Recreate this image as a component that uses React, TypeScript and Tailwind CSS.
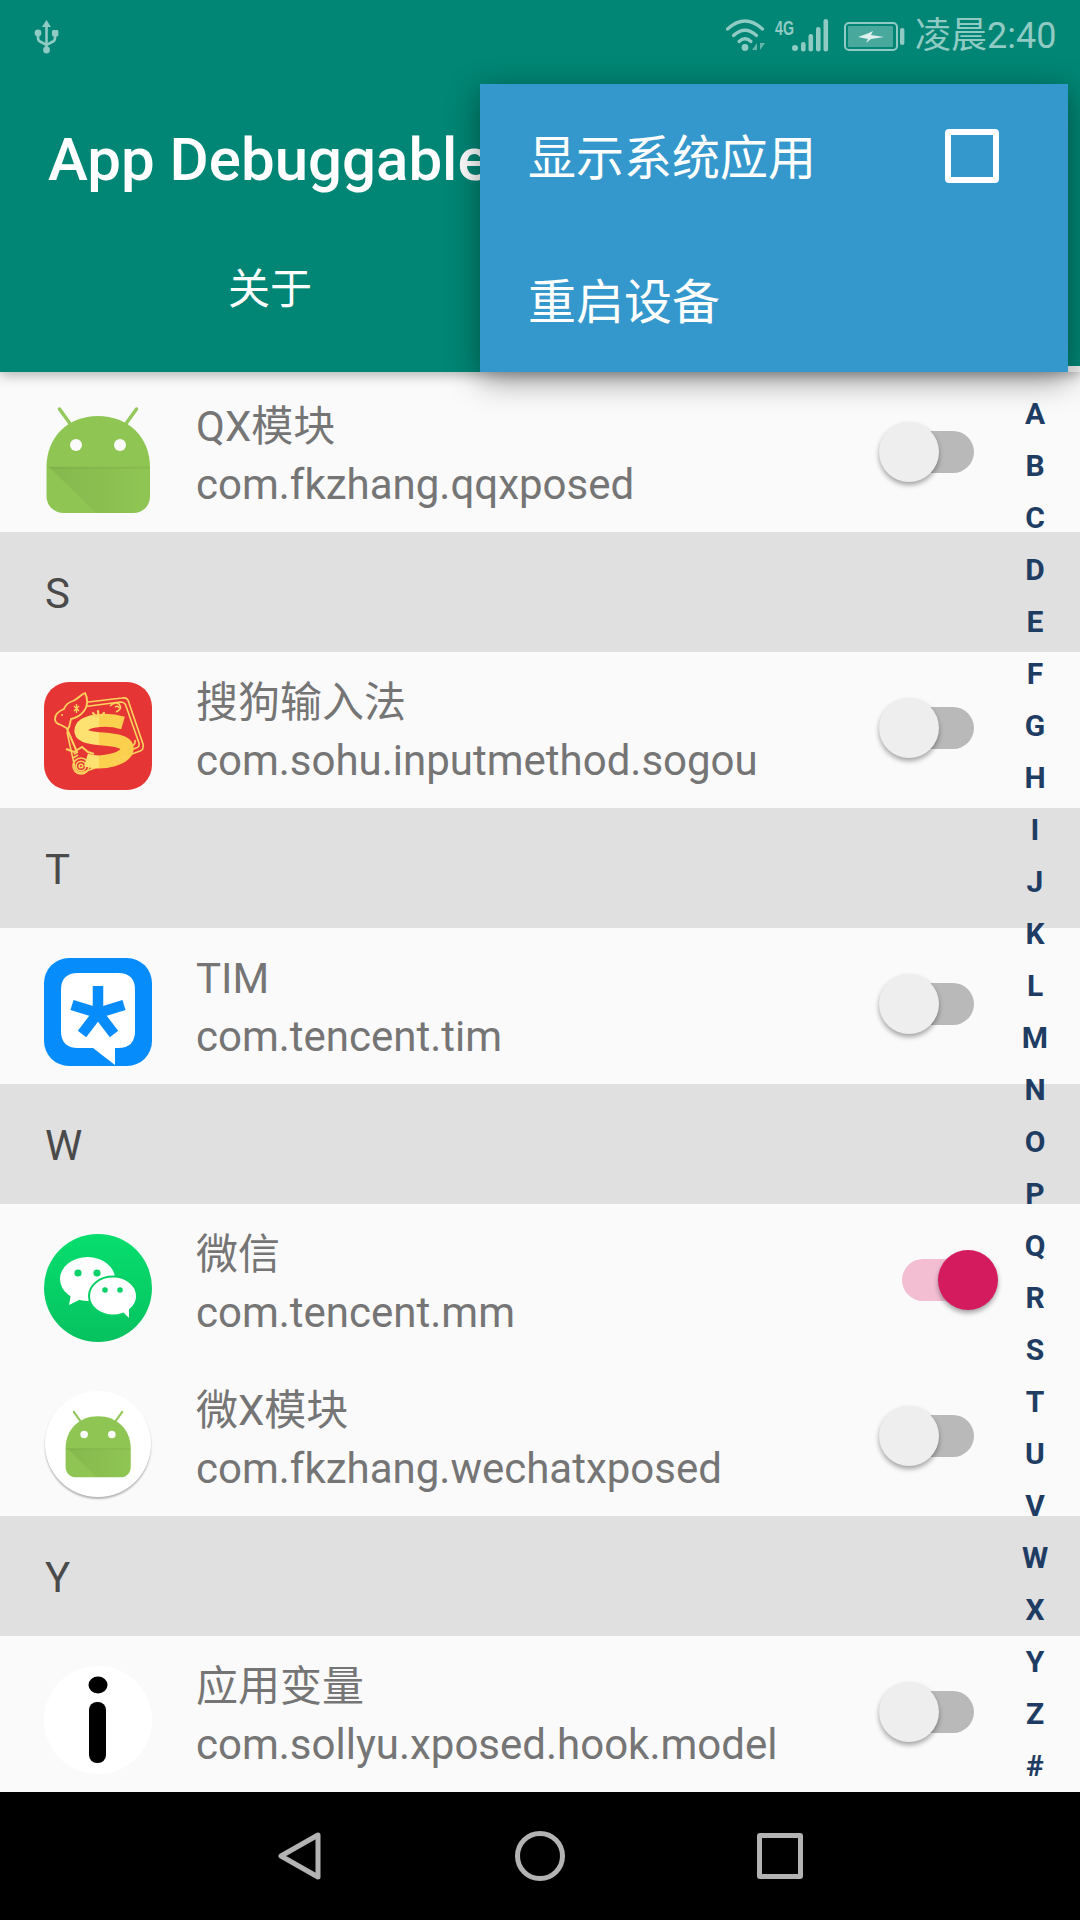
import React from "react";

const FONT = "font-['Roboto','Noto_Sans_CJK_SC',sans-serif]";

function AndroidIcon({ size = 108, id }: { size?: number; id: string }) {
  return (
    <svg width={size} height={size} viewBox="0 0 108 108">
      <defs>
        <linearGradient id={id} x1="0" y1="0" x2="1" y2="0">
          <stop offset="0" stopColor="#000" stopOpacity="0.07" />
          <stop offset="1" stopColor="#000" stopOpacity="0" />
        </linearGradient>
      </defs>
      <path d="M15.5 3 L27 19 M92.5 3 L81 19" stroke="#93c85a" strokeWidth="3.4" strokeLinecap="round" />
      <path
        d="M2.5 61 C2.5 31 24 10 54 10 C84 10 106 31 106 61 L106 90 C106 100 99 107 89 107 L20 107 C10 107 2.5 100 2.5 90 Z"
        fill="#8fc653"
      />
      <path d="M2.5 60.5 L106 60.5 L106 63 L6 63 Z" fill="#000" opacity="0.04" />
      <path d="M5 61 L52 107 L106 107 L106 61 Z" fill={`url(#${id})`} />
      <circle cx="32" cy="39" r="6" fill="#fafafa" />
      <circle cx="76" cy="39" r="6" fill="#fafafa" />
    </svg>
  );
}

function SogouIcon() {
  return (
    <svg width="108" height="108" viewBox="0 0 108 108">
      <defs>
        <linearGradient id="sg" gradientUnits="userSpaceOnUse" x1="30" y1="0" x2="84" y2="0">
          <stop offset="0.46" stopColor="#fde272" />
          <stop offset="0.46" stopColor="#fbd04f" />
        </linearGradient>
      </defs>
      <rect width="108" height="108" rx="25" fill="#e53635" />
      <g fill="none" stroke="#fbd35e" strokeWidth="1.6">
        <path d="M36 21 L78 16 Q84 15 85 21 L99 62 Q100 68 96 69 L40 90 Q33 92 31 86 L23 50" />
        <path d="M38 25 L76 20 Q81 20 82 24 L95 61 Q96 65 92 66 L60 78" />
        <path d="M66 24 q5 -5 9 -2 q4 5 -3 8 M71 25 q3 -2 4 1 M86 65 q6 -2 5 -7 M78 74 q6 -1 9 -6 M60 84 l4 -5 l6 2" />
        <circle cx="37" cy="84" r="8" />
        <circle cx="37" cy="84" r="4.8" />
        <circle cx="37" cy="84" r="1.8" />
        <path d="M47 88 l3 -7 l4 5 M29 76 l5 -3 M30 72 l4 -2" />
      </g>
      <path
        d="M11 37 C11 32 15 29 20 27 C22 22 25 20 29 19 C34 17 36 13 41 11 C44 16 44 24 40 29 C37 33 32 36 27 37 C26 41 26 44 24 47 C21 45 19 44 17 43 C13 42 11 40 11 37 Z"
        fill="#e53635"
        stroke="#fbd35e"
        strokeWidth="1.8"
      />
      <path d="M30 24 l5 5 M35 24 l-5 5 M32.5 22 l0 9" stroke="#fbd35e" strokeWidth="1.3" />
      <circle cx="18" cy="33" r="1" fill="#fbd35e" />
      <path d="M23 47 L33 70 M22 67 L30 70 L38 65 L44 70 L50 72" stroke="#fbd35e" strokeWidth="2" fill="none" />
      <path
        d="M79 41 C62 36 35 38 37 50 C39 60 81 54 83 65 C85 77 58 83 42 78"
        fill="none"
        stroke="url(#sg)"
        strokeWidth="13"
      />
      <path d="M54 29 l0.5 5 M49 31 l3 3.5 M60 31 l-3 3.5" stroke="#fbd35e" strokeWidth="2.2" strokeLinecap="round" />
      <circle cx="75" cy="78" r="1.7" fill="#fbd35e" />
      <circle cx="70" cy="80" r="1.7" fill="#fbd35e" />
      <circle cx="80" cy="75" r="1.7" fill="#fbd35e" />
    </svg>
  );
}

function TimIcon() {
  return (
    <svg width="108" height="108" viewBox="0 0 108 108">
      <rect width="108" height="108" rx="25" fill="#078cfc" />
      <path
        d="M34 15 L74 15 Q91 15 91 32 L91 73 Q91 90 74 90 L71 90 L71 107 L49 90 L34 90 Q17 90 17 73 L17 32 Q17 15 34 15 Z"
        fill="#fff"
      />
      <path d="M54 55 L54 28 M54 55 L28 47 M54 55 L80 47 M54 55 L38 76 M54 55 L70 76" stroke="#078cfc" strokeWidth="10.5" />
    </svg>
  );
}

function WechatIcon() {
  return (
    <svg width="108" height="108" viewBox="0 0 108 108">
      <defs>
        <linearGradient id="wx" x1="0" y1="0" x2="0" y2="1">
          <stop offset="0" stopColor="#07de6e" />
          <stop offset="1" stopColor="#06c25f" />
        </linearGradient>
      </defs>
      <circle cx="54" cy="54" r="54" fill="url(#wx)" />
      <ellipse cx="43.5" cy="45" rx="27.5" ry="22" fill="#fff" />
      <path d="M27 60 L25 71 L37 65 Z" fill="#fff" />
      <ellipse cx="69" cy="62" rx="24" ry="19.5" fill="#fff" stroke="#07cf66" strokeWidth="2" />
      <path d="M78 77 L85 84 L85 73 Z" fill="#fff" />
      <circle cx="34" cy="39" r="3.6" fill="#07d269" />
      <circle cx="53" cy="39" r="3.6" fill="#07d269" />
      <circle cx="61" cy="56" r="2.8" fill="#07d269" />
      <circle cx="76" cy="56" r="2.8" fill="#07d269" />
    </svg>
  );
}

function InfoIcon() {
  return (
    <svg width="108" height="108" viewBox="0 0 108 108">
      <circle cx="54" cy="54" r="54" fill="#fff" />
      <ellipse cx="54" cy="19" rx="9.5" ry="8.5" fill="#000" />
      <rect x="45" y="36" width="17" height="61" rx="8" fill="#000" />
    </svg>
  );
}

function WxModuleIcon() {
  return (
    <div className="w-[106px] h-[106px] rounded-full bg-white flex items-center justify-center shadow-[0_2px_2px_rgba(0,0,0,0.28)]">
      <AndroidIcon size={68} id="and2" />
    </div>
  );
}

function Switch({ on }: { on?: boolean }) {
  return (
    <div className="relative w-[120px] h-[60px] mt-[46px] ml-auto mr-[82px] shrink-0">
      <div
        className={
          on
            ? "absolute left-[24px] top-[9px] w-[72px] h-[42px] rounded-full bg-[#f3bed2]"
            : "absolute left-[24px] top-[9px] w-[72px] h-[42px] rounded-full bg-[#b9b9b9]"
        }
      />
      <div
        className={
          on
            ? "absolute left-[60px] top-0 w-[60px] h-[60px] rounded-full bg-[#d31b5e] shadow-[0_3px_5px_rgba(0,0,0,0.35)]"
            : "absolute left-[1px] top-0 w-[60px] h-[60px] rounded-full bg-[#eeeeee] shadow-[0_3px_5px_rgba(0,0,0,0.35)]"
        }
      />
    </div>
  );
}

function Row({
  icon,
  title,
  pkg,
  on,
  extraTop,
}: {
  icon: React.ReactNode;
  title: string;
  pkg: string;
  on?: boolean;
  extraTop?: boolean;
}) {
  return (
    <div className={extraTop ? "flex h-[160px] pt-[4px] bg-[#fafafa]" : "flex h-[156px] bg-[#fafafa]"}>
      <div className="w-[108px] h-[108px] ml-[44px] mt-[30px] shrink-0 flex items-center justify-center">{icon}</div>
      <div className="ml-[44px] pt-[21px] text-[#757575] text-[42px]">
        <div className="leading-[60px] whitespace-nowrap">{title}</div>
        <div className="leading-[60px] -mt-[2px] whitespace-nowrap">{pkg}</div>
      </div>
      <Switch on={on} />
    </div>
  );
}

function Section({ letter }: { letter: string }) {
  return (
    <div className="h-[120px] bg-[#e0e0e0] flex items-center pl-[45px] pt-[2px] text-[42px] text-[#4a4a4a]">{letter}</div>
  );
}

const LETTERS = "ABCDEFGHIJKLMNOPQRSTUVWXYZ#".split("");

export default function App() {
  return (
    <div className={`relative w-[1080px] h-[1920px] overflow-hidden bg-[#fafafa] flex flex-col ${FONT}`}>
      {/* Header */}
      <header className="relative z-10 h-[372px] shrink-0 bg-[#018574] shadow-[0_3px_12px_rgba(0,0,0,0.3)]">
        <div className="relative h-[72px]">
          <svg className="absolute left-[30px] top-[16px]" width="34" height="40" viewBox="30 16 34 40">
            <g stroke="#8fcbc3" strokeWidth="2.6" fill="none">
              <path d="M46.5 26 L46.5 50" />
              <path d="M38 33 L38 38 Q38 41 41 42 L46.5 45 L52 42 Q55 41 55 38 L55 33" />
            </g>
            <path d="M46.5 20 L51 27 L42 27 Z" fill="#8fcbc3" />
            <circle cx="38" cy="33" r="3.4" fill="#8fcbc3" />
            <rect x="52" y="30" width="6.4" height="6.4" rx="1.4" fill="#8fcbc3" />
            <circle cx="46.5" cy="50" r="3.4" fill="#8fcbc3" />
          </svg>
          <svg className="absolute left-[726px] top-[16px]" width="180" height="40" viewBox="726 16 180 40">
            <g fill="none" stroke="#8fcbc3" strokeWidth="3.2" strokeLinecap="round">
              <path d="M727.5 29 Q745 13 762.5 29" />
              <path d="M733.5 35.5 Q745 25 756.5 35.5" />
              <path d="M739 41.5 Q745 36 751 41.5" />
            </g>
            <circle cx="745" cy="47.5" r="3.4" fill="#8fcbc3" />
            <path d="M752 50 L757 43 L757 50 Z M760 43 L765 43 L760 50 Z" fill="#8fcbc3" opacity="0.7" />
            <text x="775" y="34.5" fontFamily="'Liberation Sans'" fontSize="21" fontWeight="700" fill="#8fcbc3" textLength="19" lengthAdjust="spacingAndGlyphs">
              4G
            </text>
            <circle cx="795" cy="48" r="3" fill="#8fcbc3" />
            <rect x="801" y="42" width="4.6" height="9.5" rx="2.2" fill="#8fcbc3" />
            <rect x="808.5" y="34" width="4.6" height="17.5" rx="2.2" fill="#8fcbc3" />
            <rect x="816" y="27" width="4.6" height="24.5" rx="2.2" fill="#8fcbc3" />
            <rect x="823.5" y="19" width="4.6" height="32.5" rx="2.2" fill="#8fcbc3" />
            <rect x="845" y="23" width="52" height="27" rx="4" fill="none" stroke="#8fcbc3" strokeWidth="2" />
            <rect x="848" y="26" width="45" height="21" rx="1" fill="#8fcbc3" opacity="0.5" />
            <rect x="900" y="28" width="4.4" height="17" rx="2" fill="#8fcbc3" />
            <path d="M858 37 L869 33 L873 31 L871 35 L884 37 L871 39 L866 43 L868 39 Z" fill="#dff1ee" />
          </svg>
          <div className="absolute left-[915px] top-[12px] text-[36px] leading-[48px] text-[#8fcbc3] whitespace-nowrap">
            凌晨2:40
          </div>
        </div>
        <div className="h-[168px] flex items-center pl-[48px] pt-[7px] text-white text-[60px] font-medium whitespace-nowrap">
          App Debuggable
        </div>
        <div className="flex h-[96px]">
          <div className="w-[540px] flex items-center justify-center pt-[2px] text-white text-[42px]">关于</div>
          <div className="w-[540px]" />
        </div>
        <div className="absolute right-0 bottom-0 w-[540px] h-[6px] bg-[#eeeeee]" />
      </header>

      {/* List */}
      <main className="flex-1">
        <Row extraTop icon={<AndroidIcon id="and1" />} title="QX模块" pkg="com.fkzhang.qqxposed" />
        <Section letter="S" />
        <Row icon={<SogouIcon />} title="搜狗输入法" pkg="com.sohu.inputmethod.sogou" />
        <Section letter="T" />
        <Row icon={<TimIcon />} title="TIM" pkg="com.tencent.tim" />
        <Section letter="W" />
        <Row on icon={<WechatIcon />} title="微信" pkg="com.tencent.mm" />
        <Row icon={<WxModuleIcon />} title="微X模块" pkg="com.fkzhang.wechatxposed" />
        <Section letter="Y" />
        <Row icon={<InfoIcon />} title="应用变量" pkg="com.sollyu.xposed.hook.model" />
      </main>

      {/* Nav bar */}
      <nav className="h-[128px] shrink-0 bg-black flex items-center justify-center">
        <div className="w-[240px] flex justify-center">
          <svg width="44" height="50" viewBox="0 0 44 50">
            <path d="M40 4 L40 46 L3 25 Z" fill="none" stroke="#b3b3b3" strokeWidth="5" strokeLinejoin="round" />
          </svg>
        </div>
        <div className="w-[240px] flex justify-center">
          <div className="w-[50px] h-[50px] rounded-full border-[5px] border-[#b3b3b3]" />
        </div>
        <div className="w-[240px] flex justify-center">
          <div className="w-[46px] h-[46px] rounded-[3px] border-[5px] border-[#b3b3b3]" />
        </div>
      </nav>

      {/* Overlays */}
      <div className="absolute left-[1005px] top-[387px] w-[60px] z-0 flex flex-col items-center">
        {LETTERS.map((l) => (
          <div key={l} className="h-[52px] flex items-center text-[30px] font-bold text-[#1f3d63]">
            {l}
          </div>
        ))}
      </div>

      <div className="absolute z-20 left-[480px] top-[84px] w-[588px] h-[288px] bg-[#3498cc] shadow-[0_8px_30px_rgba(0,0,0,0.4)] text-white text-[48px]">
        <div className="h-[144px] flex items-center pl-[48px] pt-[5px] relative">
          显示系统应用
          <div className="absolute left-[465px] top-[45px] w-[54px] h-[54px] rounded-[4px] border-[6px] border-white" />
        </div>
        <div className="h-[144px] flex items-center pl-[48px] pt-[5px]">重启设备</div>
      </div>
    </div>
  );
}
